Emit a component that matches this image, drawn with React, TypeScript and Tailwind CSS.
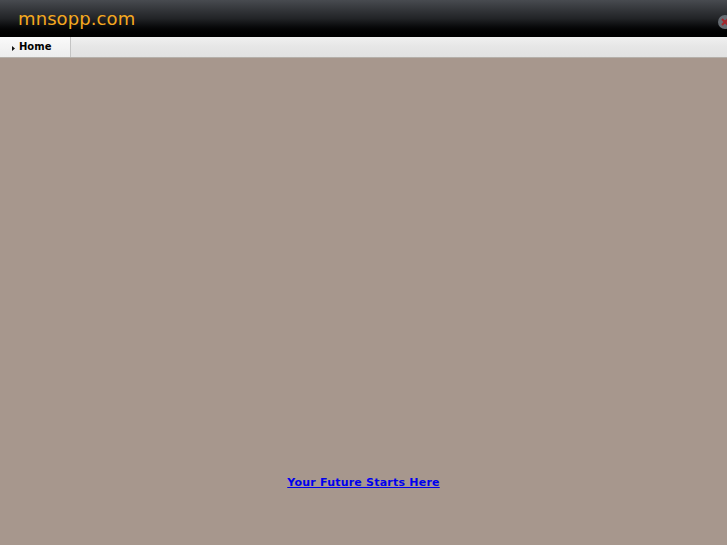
export default function App() {
  return (
    <div className="w-[727px] h-[545px] overflow-hidden flex flex-col bg-[#a7978d] font-['DejaVu_Sans',sans-serif]">
      <div className="h-[37px] shrink-0 relative bg-gradient-to-b from-[#484b50] via-[#222427] to-[#000000] pl-[18px] pt-[6px]">
        <div className="text-[18px] leading-[25px] tracking-[0.1px] text-[#f5a81f]">mnsopp.com</div>
        <svg className="absolute left-[717px] top-[14px]" width="16" height="16" viewBox="0 0 16 16">
          <circle cx="8" cy="8" r="7" fill="#666c72" />
          <path d="M5 5l6 6M11 5l-6 6" stroke="#a3262c" strokeWidth="2" />
        </svg>
      </div>
      <div className="h-[21px] shrink-0 flex border-b border-[#b5b0aa] bg-gradient-to-b from-[#f0f0f0] via-[#e6e6e6] to-[#e2e2e2]">
        <div className="w-[71px] flex items-center pl-[12px] border-r border-[#c4c4c4] bg-gradient-to-b from-[#fafafa] via-[#f3f3f3] to-[#ededed]">
          <svg width="3" height="5" viewBox="0 0 3 5" className="mr-[4px] mt-[2px]">
            <path d="M0 0l3 2.5L0 5z" fill="#111" />
          </svg>
          <span className="text-[10px] font-bold text-black leading-none">Home</span>
        </div>
      </div>
      <div className="flex-1 flex justify-center pt-[417px]">
        <a href="#" className="text-[11px] tracking-[0.22px] leading-[16px] font-bold text-[#0000ee] underline h-fit">
          Your Future Starts Here
        </a>
      </div>
    </div>
  );
}
